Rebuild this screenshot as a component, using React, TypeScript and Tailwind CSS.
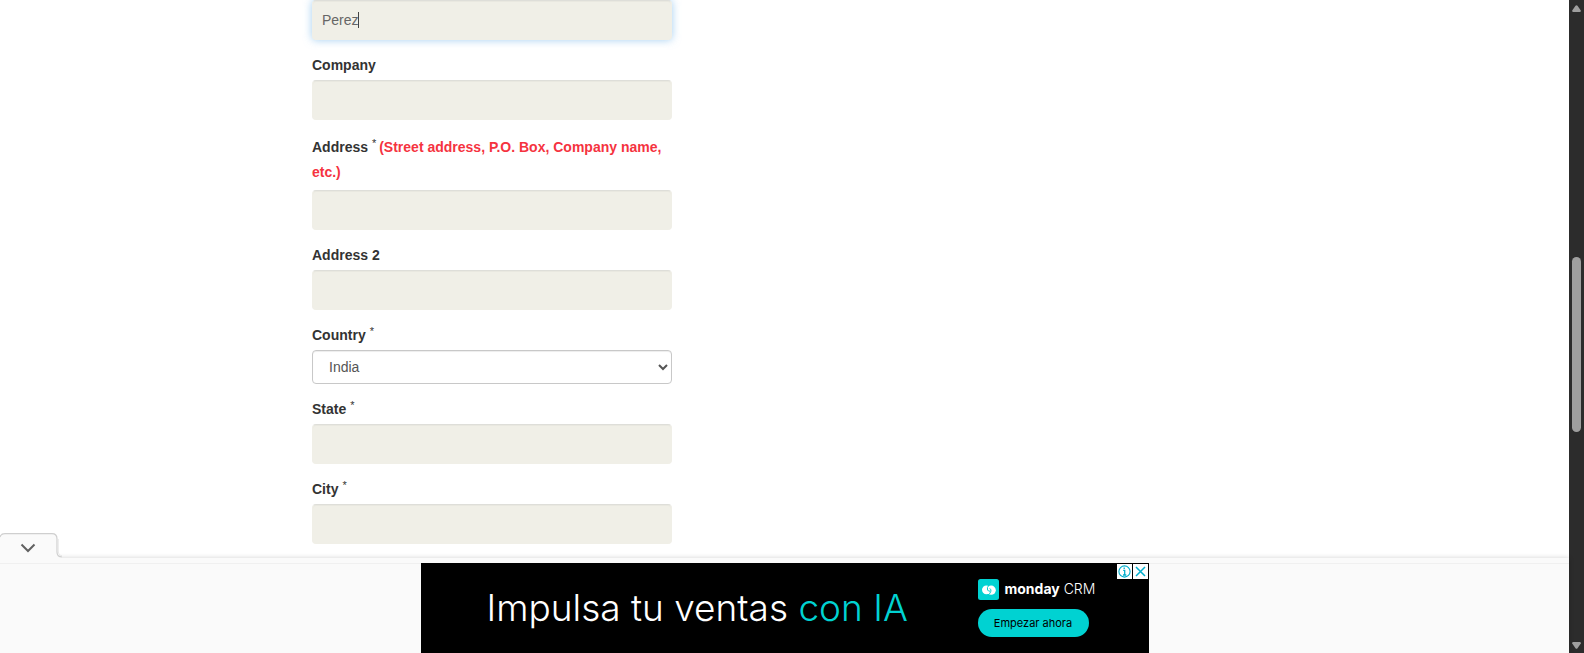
import type { ReactNode } from "react";

const inputBase =
  "block h-10 w-full rounded border border-[#f0efe7] border-t-[#deded9] bg-[#f0efe7] px-[9px] text-sm text-[#666666] caret-transparent outline-none";
const restShadow = "shadow-[inset_0_1px_1px_rgba(0,0,0,0.03)]";
const focusShadow = "shadow-[inset_0_1px_1px_rgba(0,0,0,0.03),0_0_8px_rgba(102,175,233,0.6)]";

function Field({ id, label, required }: { id: string; label: string; required?: boolean }) {
  return (
    <div className="mt-[13px]">
      <FieldLabel id={id} required={required}>
        {label}
      </FieldLabel>
      <input id={id} type="text" className={`${inputBase} ${restShadow}`} />
    </div>
  );
}

function FieldLabel({ id, required, children }: { id: string; required?: boolean; children: ReactNode }) {
  return (
    <label htmlFor={id} className="block pb-[2px] text-sm leading-[25px] font-bold text-[#333333]">
      {children}
      {required && <Star />}
    </label>
  );
}

function Star() {
  return <sup className="-top-[5px] ml-1 text-[11px] leading-none font-normal">*</sup>;
}

function AddressForm() {
  return (
    <form className="w-[360px]">
      <div className="relative">
        <input
          type="text"
          aria-label="Last name"
          defaultValue="Perez"
          className={`${inputBase} ${focusShadow}`}
        />
        <span className="absolute top-3 left-[46px] h-4 w-px bg-[#444444]" />
      </div>
      <Field id="company" label="Company" />
      <div className="mt-[15px]">
        <label htmlFor="address" className="block pb-[5px] text-sm leading-[25px] font-bold text-[#333333]">
          Address
          <Star /> <span className="-ml-px text-[#f5333f]">(Street address, P.O. Box, Company name, etc.)</span>
        </label>
        <input id="address" type="text" className={`${inputBase} ${restShadow}`} />
      </div>
      <Field id="address2" label="Address 2" />
      <div className="mt-[13px]">
        <FieldLabel id="country" required>
          Country
        </FieldLabel>
        <select
          id="country"
          className="block h-[34px] w-full rounded border border-[#c8c8c8] bg-white px-3 text-sm text-[#555555] shadow-[inset_0_1px_1px_rgba(0,0,0,0.075)]"
        >
          <option>India</option>
        </select>
      </div>
      <Field id="state" label="State" required />
      <Field id="city" label="City" required />
    </form>
  );
}

function AdBanner() {
  return (
    <div className="relative flex h-[90px] w-[728px] items-center bg-black font-['Inter',sans-serif]">
      <p className="w-[557px] pl-[66px] text-[37px] leading-[40px] font-light whitespace-nowrap text-white">
        Impulsa tu ventas <span className="text-[#00d2d2]">con IA</span>
      </p>
      <div className="flex flex-col items-start gap-[9px]">
        <div className="flex items-center gap-[6px]">
          <svg viewBox="0 0 21 21" className="size-[21px]">
            <rect width="21" height="21" rx="2.5" fill="#00d2d2" />
            <circle cx="8.4" cy="10.8" r="4.4" fill="#fff" />
            <circle cx="13.2" cy="11.2" r="4.6" fill="#fff" />
            <path d="M10.9 6.2Q8.6 8.6 9.6 11Q10.3 12.4 12 12.2" fill="none" stroke="#00d2d2" strokeWidth="1" />
            <path d="M11.6 9.6Q13.4 10 12.9 12.2Q12.2 14.4 10.4 15.8" fill="none" stroke="#00d2d2" strokeWidth="1" />
          </svg>
          <p className="pb-[2px] text-[14px] leading-[18px] whitespace-nowrap text-white">
            <span className="font-bold">monday</span> <span className="font-light">CRM</span>
          </p>
        </div>
        <button type="button" className="h-7 w-[111px] rounded-full bg-[#00d2d2] text-[11px] text-black">
          Empezar ahora
        </button>
      </div>
      <div className="absolute top-px right-px flex gap-px">
        <button type="button" aria-label="Ad information" className="size-[15px] bg-white">
          <svg viewBox="0 0 15 15" className="size-[15px]" fill="none" stroke="#00aecd" strokeWidth="1.1">
            <circle cx="7.5" cy="7.5" r="5.6" />
            <path d="M6.2 6.3h1.5v4.5M6 11h3.3M7.2 3.6v1.4" strokeWidth="1.3" />
          </svg>
        </button>
        <button type="button" aria-label="Close ad" className="size-[15px] bg-white">
          <svg viewBox="0 0 15 15" className="size-[15px]" fill="none" stroke="#00aecd" strokeWidth="1.5">
            <path d="M3 3l9 9M12 3l-9 9" />
          </svg>
        </button>
      </div>
    </div>
  );
}

function AdDock() {
  return (
    <footer className="relative bg-[#fafafa] pt-[5px] shadow-[0_0_5px_rgba(0,0,0,0.18)]">
      <button
        type="button"
        aria-label="Collapse"
        className="absolute -top-[25px] left-0 h-[25px] w-[70px]"
      >
        <svg viewBox="0 0 70 25" className="h-[25px] w-[70px]">
          <path d="M0 25V4Q1 .7 5 .7H52Q57 .7 57 6V19Q57 24 62 24V25Z" fill="#fafafa" />
          <path d="M0 4Q1 .7 5 .7H52Q57 .7 57 6V19Q57 24 62 24" fill="none" stroke="#cfcfcf" strokeWidth="1.2" />
          <path d="M58.3 6V18Q58.3 22.5 62 22.7" fill="none" stroke="#e9e9e9" />
          <path d="M21.5 11.5L28 18L34.5 11.5" fill="none" stroke="#616161" strokeWidth="2" />
        </svg>
      </button>
      <div className="flex justify-center shadow-[inset_0_1px_0_#f0f0f0]">
        <AdBanner />
      </div>
    </footer>
  );
}

function ScrollTrack() {
  return (
    <div className="flex w-[15px] shrink-0 flex-col items-center bg-[#2c2c2c] pt-[5px] pb-[3px]">
      <svg viewBox="0 0 9 8" className="h-2 w-[9px]" fill="#9f9f9f">
        <path d="M3.5 .8Q4.5 -.4 5.5 .8L8.8 5.6Q9 7 7.8 7H1.2Q0 7 .2 5.6Z" />
      </svg>
      <div className="grow-[244] basis-0" />
      <div className="w-[9px] grow-[175] basis-0 rounded-full bg-[#9f9f9f]" />
      <div className="grow-[210] basis-0" />
      <svg viewBox="0 0 9 8" className="h-2 w-[9px]" fill="#9f9f9f">
        <path d="M3.5 6.2Q4.5 7.4 5.5 6.2L8.8 1.4Q9 0 7.8 0H1.2Q0 0 .2 1.4Z" />
      </svg>
    </div>
  );
}

export default function App() {
  return (
    <div className="flex h-screen bg-white font-['Liberation_Sans',Arial,sans-serif]">
      <div className="flex min-w-0 flex-1 flex-col">
        <main className="min-h-0 flex-1 overflow-hidden">
          <div className="mx-auto max-w-[1169px] pl-28">
            <AddressForm />
          </div>
        </main>
        <AdDock />
      </div>
      <ScrollTrack />
    </div>
  );
}
